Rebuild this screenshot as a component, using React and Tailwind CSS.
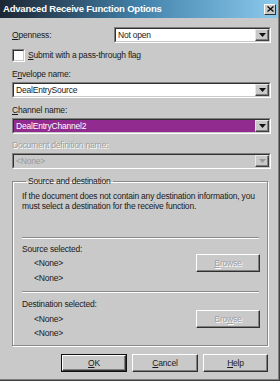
import React from 'react';

const font = { fontFamily: '"Liberation Sans", Arial, sans-serif' };

function Arrow({ disabled }) {
    return (
        <div className="w-[14px] h-full flex items-center justify-center bg-[#c9c9c9] border-t border-l border-t-[#e8e8e8] border-l-[#e8e8e8] border-r border-b border-r-[#404040] border-b-[#404040] shadow-[inset_-1px_-1px_0_#808080]">
            <svg width="7" height="4" viewBox="0 0 7 4">
                <path d="M0 0 H7 L3.5 4 Z" fill={disabled ? '#9a9a9a' : '#111'} />
            </svg>
        </div>
    );
}

function Combo({ value, purple, disabled, className = '' }) {
    const bg = purple ? 'bg-[#912b8f] text-white' : disabled ? 'bg-[#c9c9c9] text-[#9a9a9a]' : 'bg-white text-[#1a1a1a]';
    return (
        <div className={`h-[16px] border-t border-l border-t-[#808080] border-l-[#808080] border-b border-r border-b-white border-r-white ${className}`}>
            <div className="h-full flex border-t border-l border-t-[#303030] border-l-[#303030] border-b border-r border-b-[#c9c9c9] border-r-[#c9c9c9]">
                <div className={`flex-1 flex items-center pl-[2px] text-[8.5px] leading-none ${bg}`}>{value}</div>
                <Arrow disabled={disabled} />
            </div>
        </div>
    );
}

function Button({ children, disabled, primary, className = '' }) {
    return (
        <div className={`${primary ? 'border border-[#111]' : ''} ${className}`}>
            <div className="h-full flex items-center justify-center bg-[#c9c9c9] border-t border-l border-t-white border-l-white border-r border-b border-r-[#303030] border-b-[#303030] shadow-[inset_-1px_-1px_0_#808080]">
                <span className={`text-[8.5px] leading-none ${disabled ? 'text-[#a0a0a0] [text-shadow:1px_1px_0_#fff]' : 'text-[#1a1a1a]'}`}>{children}</span>
            </div>
        </div>
    );
}

function Separator() {
    return <div className="h-[2px] border-t border-t-[#8a8a8a] border-b border-b-white" />;
}

export default function App() {
    return (
        <div style={font} className="w-[280px] h-[381px] bg-[#c9c9c9] flex flex-col text-[#1a1a1a] tracking-[-0.2px] overflow-hidden shadow-[inset_-1px_-1px_0_#404040,inset_-2px_-2px_0_#808080]">
            {/* title bar */}
            <div className="h-[18px] mr-[2px] flex items-center justify-between pl-[3px] pr-[2px] bg-gradient-to-r from-[#1c2634] via-[#4282aa] to-[#8ccaee]">
                <span className="text-white font-bold text-[9.5px] leading-none tracking-[-0.2px]">Advanced Receive Function Options</span>
                <div className="w-[12px] h-[11px] flex items-center justify-center bg-[#c9c9c9] border-t border-l border-t-white border-l-white border-r border-b border-r-[#303030] border-b-[#303030]">
                    <svg width="7" height="6" viewBox="0 0 7 6">
                        <path d="M0.5 0.5 L6.5 5.5 M6.5 0.5 L0.5 5.5" stroke="#111" strokeWidth="1.4" />
                    </svg>
                </div>
            </div>

            <div className="flex flex-col pl-[12px] pr-[9px]">
                {/* openness */}
                <div className="mt-[9px] h-[16px] flex items-center">
                    <span className="w-[102px] text-[8.5px] leading-none"><u>O</u>penness:</span>
                    <Combo value="Not open" className="flex-1" />
                </div>

                {/* checkbox */}
                <div className="mt-[6px] h-[13px] flex items-center gap-[3px]">
                    <div className="w-[13px] h-[13px] border-t border-l border-t-[#808080] border-l-[#808080] border-b border-r border-b-white border-r-white">
                        <div className="h-full bg-white border-t border-l border-t-[#303030] border-l-[#303030] border-b border-r border-b-[#c9c9c9] border-r-[#c9c9c9]" />
                    </div>
                    <span className="text-[8.5px] leading-none"><u>S</u>ubmit with a pass-through flag</span>
                </div>

                <div className="mt-[7px] h-[11px] text-[8.5px] leading-[11px]">E<u>n</u>velope name:</div>
                <Combo value="DealEntrySource" className="mt-[2px]" />

                <div className="mt-[7px] h-[11px] text-[8.5px] leading-[11px]"><u>C</u>hannel name:</div>
                <Combo value="DealEntryChannel2" purple className="mt-[2px]" />

                <div className="mt-[6px] h-[11px] text-[8.5px] leading-[11px] text-[#a0a0a0] [text-shadow:1px_1px_0_#fff]">Document definition name:</div>
                <Combo value="<None>" disabled className="mt-[2px]" />

                {/* source and destination */}
                <fieldset className="mt-[7px] mr-[3px] border border-[#8a8a8a] shadow-[1px_1px_0_#fff,inset_1px_1px_0_#fff] pl-[9px] pr-[7px] pb-[7px]">
                    <legend className="ml-[4px] px-[2px] text-[8.5px] leading-[11px]">Source and destination</legend>
                    <div className="pt-[4px] text-[8.5px] leading-[10px]">
                        If the document does not contain any destination information, you must select a destination for the receive function.
                    </div>
                    <div className="mt-[26px] mr-[1px]"><Separator /></div>

                    <div className="mt-[5px] h-[10px] text-[8.5px] leading-[10px]">Source selected:</div>
                    <div className="flex justify-between">
                        <div className="pl-[12px] pt-[4px] flex flex-col gap-[5px] text-[8.5px] leading-[10px]">
                            <span>&lt;None&gt;</span>
                            <span>&lt;None&gt;</span>
                        </div>
                        <Button disabled className="w-[64px] h-[18px]"><u>B</u>rowse</Button>
                    </div>

                    <div className="mt-[8px] mr-[1px]"><Separator /></div>

                    <div className="mt-[6px] h-[10px] text-[8.5px] leading-[10px]">Destination selected:</div>
                    <div className="flex justify-between">
                        <div className="pl-[12px] pt-[5px] flex flex-col gap-[4px] text-[8.5px] leading-[10px]">
                            <span>&lt;None&gt;</span>
                            <span>&lt;None&gt;</span>
                        </div>
                        <Button disabled className="w-[64px] h-[18px] mt-[1px]">Bro<u>w</u>se</Button>
                    </div>
                </fieldset>

                {/* dialog buttons */}
                <div className="mt-[8px] mr-[3px] flex justify-end gap-[5px]">
                    <Button primary className="w-[66px] h-[18px]"><u>O</u>K</Button>
                    <Button className="w-[66px] h-[18px]"><u>C</u>ancel</Button>
                    <Button className="w-[65px] h-[18px]"><u>H</u>elp</Button>
                </div>
            </div>
        </div>
    );
}
